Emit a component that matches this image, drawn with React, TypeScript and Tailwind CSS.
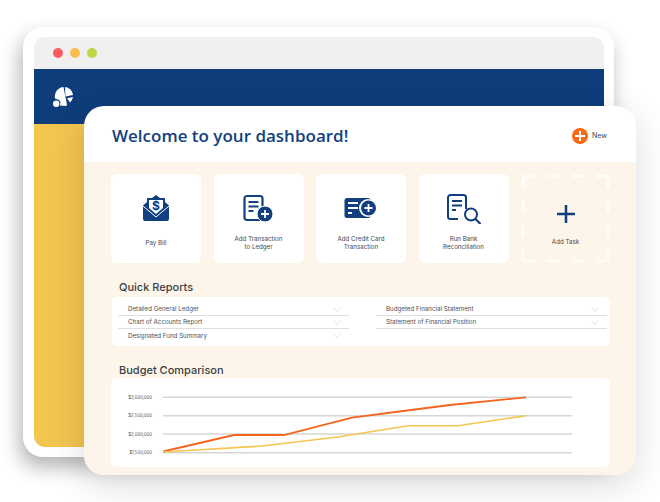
import type { ReactNode } from 'react'

const BLUE = '#123f80'

const tiles = [
  { label: ['Pay Bill'], icon: <PayBillIcon /> },
  { label: ['Add Transaction', 'to Ledger'], icon: <LedgerIcon /> },
  { label: ['Add Credit Card', 'Transaction'], icon: <CardIcon /> },
  { label: ['Run Bank', 'Reconciliation'], icon: <SearchDocIcon /> },
]

const leftReports = ['Detailed General Ledger', 'Chart of Accounts Report', 'Designated Fund Summary']
const rightReports = ['Budgeted Financial Statement', 'Statement of Financial Position']

function PayBillIcon() {
  return (
    <svg width="28" height="28" viewBox="0 0 28 28">
      <path d="M14 1l4 3h5v4l4 3.500V25a2 2 0 0 1-2 2H3a2 2 0 0 1-2-2V11.500l4-3.500V4h5z" fill={BLUE} />
      <path d="M7 6h14v8l-7 6-7-6z" fill="#fff" />
      <path d="M1 12l13 11 13-11" fill="none" stroke="#fff" strokeWidth="1" />
      <text x="14" y="16" textAnchor="middle" fontSize="12" fontWeight="700" fill={BLUE} fontFamily="Inter, sans-serif">$</text>
    </svg>
  )
}

function LedgerIcon() {
  return (
    <svg width="32" height="28" viewBox="0 0 32 28">
      <rect x="1.500" y="2" width="18" height="24" rx="2.500" fill="none" stroke={BLUE} strokeWidth="2.200" />
      <path d="M5.500 8h10M5.500 12.500h10M5.500 17h5" stroke={BLUE} strokeWidth="2.200" />
      <circle cx="22" cy="20" r="8" fill={BLUE} stroke="#fff" strokeWidth="1" />
      <path d="M22 16v8M18 20h8" stroke="#fff" strokeWidth="1.800" />
    </svg>
  )
}

function CardIcon() {
  return (
    <svg width="34" height="22" viewBox="0 0 34 22">
      <rect x="0.500" y="1" width="26" height="20" rx="2.500" fill={BLUE} />
      <path d="M4 6h10M4 11h10M4 16h4" stroke="#fff" strokeWidth="2" />
      <circle cx="24" cy="11" r="9" fill="#fff" />
      <circle cx="24.500" cy="11" r="7.500" fill={BLUE} />
      <path d="M24.500 7v8M20.500 11h8" stroke="#fff" strokeWidth="1.800" />
    </svg>
  )
}

function SearchDocIcon() {
  return (
    <svg width="36" height="32" viewBox="0 0 36 32">
      <path d="M20 17V5.500A2.500 2.500 0 0 0 17.500 3h-13A2.500 2.500 0 0 0 2 5.500v19A2.500 2.500 0 0 0 4.500 27H12" fill="none" stroke={BLUE} strokeWidth="2" />
      <path d="M6 9h10M6 13.500h10M6 18h4" stroke={BLUE} strokeWidth="2" />
      <circle cx="25" cy="22.500" r="6" fill="#fff" stroke={BLUE} strokeWidth="2" />
      <path d="M29.500 27l5 5" stroke={BLUE} strokeWidth="2.200" />
    </svg>
  )
}

function Logo() {
  return (
    <svg width="20" height="20" viewBox="0 0 20 20" fill="#fff">
      <path d="M10.500 0A9.500 9.500 0 0 0 2 11.500l4 1.500 1.500 2-.5 3.500 6 .500 1-1z" />
      <path d="M12 0A9 9 0 0 1 20 8L12.500 9.500z" />
      <path d="M20 10l-6 1.200 3 4.300A9 9 0 0 0 20 10z" />
      <circle cx="3.200" cy="16.700" r="3.200" />
    </svg>
  )
}

function Chevron() {
  return (
    <svg width="8" height="5" viewBox="0 0 8 5" fill="none" stroke="#d9d9d9" strokeWidth="0.800">
      <path d="M0.500 0.500L4 4.500L7.500 0.500" />
    </svg>
  )
}

function ReportRow({ name, line }: { name: string; line: boolean }) {
  return (
    <div className={`flex h-[13px] items-center justify-between pl-[10px] pr-[8px] ${line ? 'border-b border-[#dfe0e2]' : ''}`}>
      <span className="text-[6.200px] text-[#4c5055]">{name}</span>
      <Chevron />
    </div>
  )
}

function Tile({ label, icon }: { label: string[]; icon: ReactNode }) {
  return (
    <div className="flex h-[89px] w-[90px] flex-col items-center rounded-[6px] bg-white pt-[18px]">
      <div className="flex h-[32px] items-center justify-center">{icon}</div>
      <div className="mt-[6px] flex h-[25px] flex-col items-center justify-center text-center text-[6.200px] leading-[7.500px] text-[#44484d]">
        {label.map((l) => (
          <span key={l}>{l}</span>
        ))}
      </div>
    </div>
  )
}

function DashedOutline() {
  return (
    <svg className="absolute inset-0" width="89" height="89" viewBox="0 0 89 89" fill="none" stroke="#fff" strokeWidth="3" opacity="0.7">
      <path d="M2 14V5a3 3 0 0 1 3-3h9M75 2h9a3 3 0 0 1 3 3v9M87 75v9a3 3 0 0 1-3 3h-9M14 87H5a3 3 0 0 1-3-3v-9" />
      <path d="M26 2h12M51 2h12M26 87h12M51 87h12M2 26v12M2 51v12M87 26v12M87 51v12" />
    </svg>
  )
}

function Chart() {
  const ys = [397.3, 415.7, 434, 452.7]
  const labels = ['$3,000,000', '$2,500,000', '$2,000,000', '$1,500,000']
  return (
    <svg width="499" height="89" viewBox="111 378 499 89">
      {ys.map((y, i) => (
        <g key={y}>
          <line x1="163" x2="572" y1={y} y2={y} stroke="#d6d6d6" strokeWidth="1.500" />
          <text x="152" y={y + 1.600} textAnchor="end" fontSize="4.300" fill="#4a4a4a" fontFamily="Inter, sans-serif">{labels[i]}</text>
        </g>
      ))}
      <polyline points="163,451.500 234,435 284,435 352,417.700 407,410.500 450,405 526,397.300" fill="none" stroke="#f5651d" strokeWidth="1.800" />
      <polyline points="163,452 262,446 338,437 408,425.700 458,425.700 526,415.700" fill="none" stroke="#f4c64f" strokeWidth="1.600" />
    </svg>
  )
}

export default function App() {
  return (
    <div className="relative h-[502px] w-[660px] overflow-hidden bg-white" style={{ fontFamily: 'Inter, sans-serif' }}>
      {/* back window */}
      <div className="absolute left-[23px] top-[27px] h-[430px] w-[591px] rounded-[20px] bg-white p-[10px] pl-[11px] shadow-[-3px_10px_20px_rgba(0,0,0,0.3)]">
        <div className="flex h-full flex-col overflow-hidden rounded-[11px]">
          <div className="flex h-[32px] items-center gap-[7px] bg-[#f0f0f0] pl-[19px]">
            <span className="h-[10px] w-[10px] rounded-full bg-[#fb5c62]" />
            <span className="h-[10px] w-[10px] rounded-full bg-[#fbbd4c]" />
            <span className="h-[10px] w-[10px] rounded-full bg-[#bcd645]" />
          </div>
          <div className="flex h-[55px] items-center bg-[#0f3d7c] pl-[19px]">
            <Logo />
          </div>
          <div className="flex-1 bg-gradient-to-r from-[#f3c650] to-[#e6b84a]" />
        </div>
      </div>

      {/* front dashboard */}
      <div className="absolute left-[84px] top-[106px] flex h-[369px] w-[552px] flex-col overflow-hidden rounded-[20px] bg-white shadow-[0_10px_36px_rgba(0,0,0,0.14)]">
        <div className="flex h-[56px] items-center justify-between pl-[28px] pr-[29px] pt-[4px]">
          <h1 className="text-[17px] font-semibold text-[#123f80]" style={{ fontFamily: '"Open Sans", sans-serif' }}>Welcome to your dashboard!</h1>
          <div className="flex items-center gap-[4px]">
            <span className="relative h-[16px] w-[16px] rounded-full bg-[#f96a12]">
              <span className="absolute left-[3px] top-[7px] h-[2px] w-[10px] bg-white" />
              <span className="absolute left-[7px] top-[3px] h-[10px] w-[2px] bg-white" />
            </span>
            <span className="text-[7px] text-[#44484d]">New</span>
          </div>
        </div>

        <div className="flex-1 bg-[#fdf5ea] pl-[27px] pr-[26px] pt-[12px]">
          <div className="flex gap-[12.500px]">
            {tiles.map((t) => (
              <Tile key={t.label[0]} label={t.label} icon={t.icon} />
            ))}
            <div className="relative flex h-[89px] w-[89px] flex-col items-center pt-[30px]">
              <DashedOutline />
              <svg width="20" height="20" viewBox="0 0 20 20" stroke={BLUE} strokeWidth="2.500">
                <path d="M10 1v18M1 10h18" />
              </svg>
              <span className="mt-[13px] text-[6.200px] text-[#44484d]">Add Task</span>
            </div>
          </div>

          <h2 className="ml-[8px] mt-[15px] h-[19px] text-[11px] font-medium leading-[19px] text-[#3a3f45]">Quick Reports</h2>
          <div className="ml-[1px] flex h-[49px] gap-[27px] rounded-[5px] bg-white pl-[6px] pt-[6px]">
            <div className="w-[231px] shrink-0">
              {leftReports.map((r, i) => (
                <ReportRow key={r} name={r} line={i < 2} />
              ))}
            </div>
            <div className="w-[231px] shrink-0">
              {rightReports.map((r) => (
                <ReportRow key={r} name={r} line />
              ))}
            </div>
          </div>

          <h2 className="ml-[8px] mt-[16px] h-[16px] text-[11px] font-medium leading-[16px] text-[#3a3f45]">Budget Comparison</h2>
          <div className="h-[89px] w-[499px] rounded-[5px] bg-white">
            <Chart />
          </div>
        </div>
      </div>
    </div>
  )
}
